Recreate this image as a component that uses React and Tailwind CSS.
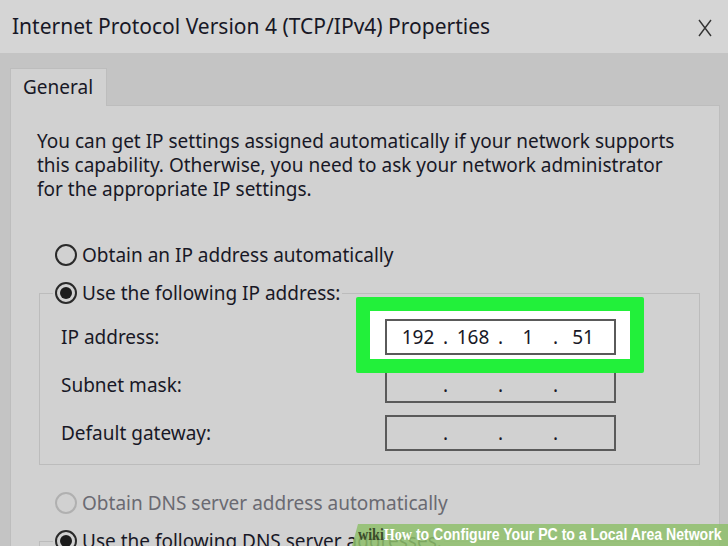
import React from "react";

function Radio({ checked, disabled }) {
  return (
    <span
      className={
        "inline-flex items-center justify-center w-[22px] h-[22px] rounded-full border-2 shrink-0 " +
        (disabled ? "border-[#b0b0b0]" : "border-[#2a2a2a]")
      }
    >
      {checked ? <span className="w-[12px] h-[12px] rounded-full bg-[#1c1c1c]" /> : null}
    </span>
  );
}

function IpBox({ values, white }) {
  return (
    <div
      className={
        "w-[231px] h-[36px] border-2 border-[#5a5a5a] flex items-center pl-[11px] " +
        (white ? "bg-white" : "")
      }
    >
      <span className="w-[40px] text-center">{values[0]}</span>
      <span className="w-[15px] text-center">.</span>
      <span className="w-[40px] text-center">{values[1]}</span>
      <span className="w-[15px] text-center">.</span>
      <span className="w-[40px] text-center">{values[2]}</span>
      <span className="w-[15px] text-center">.</span>
      <span className="w-[40px] text-center">{values[3]}</span>
    </div>
  );
}

export default function App() {
  const font = "font-['Noto_Sans','DejaVu_Sans',sans-serif]";
  return (
    <div className={"relative w-[728px] h-[546px] overflow-hidden bg-[#c4c4c4] text-[#181826] " + font}>
      {/* Title bar */}
      <div className="h-[53px] bg-[#d5d5d5] flex items-center justify-between pl-[12px] pr-[16px]">
        <span className="text-[21px]">Internet Protocol Version 4 (TCP/IPv4) Properties</span>
        <svg width="14" height="18" viewBox="0 0 14 18" className="mt-[2px]">
          <path d="M1 1 L13 17 M13 1 L1 17" stroke="#333" strokeWidth="1.4" fill="none" />
        </svg>
      </div>

      {/* Body */}
      <div className="pl-[10px] pr-[8px] pt-[15px]">
        {/* Tab */}
        <div className="w-[97px] h-[38px] bg-[#d1d1d1] border border-b-0 border-[#bdbdbd] flex items-center pl-[12px] text-[19px] -mb-px relative">
          General
        </div>
        {/* Panel */}
        <div className="bg-[#d1d1d1] border border-[#bdbdbd] h-[460px] pl-[26px] pt-[23px] text-[19px]">
          <p className="leading-[24px]">
            You can get IP settings assigned automatically if your network supports
            <br />
            this capability. Otherwise, you need to ask your network administrator
            <br />
            for the appropriate IP settings.
          </p>

          <div className="mt-[42px] flex items-center h-[24px] pl-[18px] gap-[5px]">
            <Radio />
            <span>Obtain an IP address automatically</span>
          </div>

          <fieldset className="mt-[14px] ml-[2px] w-[661px] border border-[#bcbcbc] pb-[13px]">
            <legend className="ml-[13px] px-[2px] flex items-center h-[24px] gap-[5px]">
              <Radio checked />
              <span>Use the following IP address:</span>
            </legend>
            <div className="pt-[14px] pl-[21px] flex flex-col gap-[12px]">
              <div className="flex items-center h-[36px]">
                <span className="w-[324px]">IP address:</span>
                <div className="relative">
                  <div className="absolute left-[-29px] top-[-22px] w-[288px] h-[76px] bg-[#22f03a] rounded-[2px] p-[14px]">
                    <div className="w-full h-full bg-white" />
                  </div>
                  <div className="relative">
                    <IpBox values={["192", "168", "1", "51"]} white />
                  </div>
                </div>
              </div>
              <div className="flex items-center h-[36px]">
                <span className="w-[324px]">Subnet mask:</span>
                <IpBox values={["", "", "", ""]} />
              </div>
              <div className="flex items-center h-[36px]">
                <span className="w-[324px]">Default gateway:</span>
                <IpBox values={["", "", "", ""]} />
              </div>
            </div>
          </fieldset>

          <div className="mt-[26px] flex items-center h-[24px] pl-[18px] gap-[5px] text-[#6a6a72]">
            <Radio disabled />
            <span>Obtain DNS server address automatically</span>
          </div>

          <fieldset className="mt-[14px] ml-[2px] w-[661px] border border-[#bcbcbc] h-[60px]">
            <legend className="ml-[13px] px-[2px] flex items-center h-[24px] gap-[5px]">
              <Radio checked />
              <span>Use the following DNS server addresses:</span>
            </legend>
          </fieldset>
        </div>
      </div>

      {/* Watermark */}
      <div className="absolute left-[352px] bottom-0 w-[380px] h-[22px] bg-[#8fbf6c]/85 [clip-path:polygon(6px_0,100%_0,100%_100%,0_100%)] flex items-center pl-[6px] whitespace-nowrap">
        <span className="inline-block origin-left scale-x-[0.88] font-['Liberation_Sans',sans-serif] font-bold text-[16px] text-white">
          <span className="font-['Liberation_Serif',serif] text-[#3a4a2a]">wiki</span>
          <span className="font-['Liberation_Serif',serif]">How</span>
          <span> to Configure Your PC to a Local Area Network</span>
        </span>
      </div>
    </div>
  );
}
